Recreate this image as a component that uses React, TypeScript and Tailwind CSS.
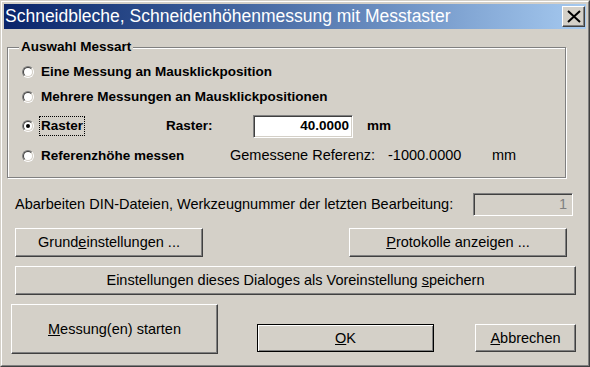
import type { ReactNode } from "react"

function Radio({ checked = false }: { checked?: boolean }) {
  return (
    <span className="flex h-[12px] w-[12px] shrink-0 rounded-full border border-t-[#808080] border-l-[#808080] border-r-white border-b-white">
      <span className="flex h-full w-full items-center justify-center rounded-full border border-t-[#404040] border-l-[#404040] border-r-[#d4d0c8] border-b-[#d4d0c8] bg-white">
        {checked && <span className="h-[4px] w-[4px] rounded-full bg-black" />}
      </span>
    </span>
  )
}

function Option({ label, checked = false, focused = false }: { label: string; checked?: boolean; focused?: boolean }) {
  return (
    <div className="flex items-center">
      <Radio checked={checked} />
      <span
        className={`ml-[5px] border border-dotted px-[1px] text-[13.5px] font-bold leading-[18px] ${
          focused ? "border-black" : "border-transparent"
        }`}
      >
        {label}
      </span>
    </div>
  )
}

function WinButton({ children, className = "" }: { children: ReactNode; className?: string }) {
  return (
    <div
      className={`flex items-center justify-center border border-t-white border-l-white border-r-[#404040] border-b-[#404040] text-[14.5px] leading-none shadow-[inset_-1px_-1px_0_#808080] ${className}`}
    >
      {children}
    </div>
  )
}

export default function App() {
  return (
    <div className="h-[367px] w-[590px] overflow-hidden border border-t-[#d4d0c8] border-l-[#d4d0c8] border-r-[#404040] border-b-[#404040] bg-[#d4d0c8] font-['Liberation_Sans',Arial,sans-serif] text-black select-none">
      <div className="flex h-full flex-col border border-t-white border-l-white border-r-[#808080] border-b-[#808080] p-[2px]">
        {/* Title bar */}
        <div className="flex h-[25px] shrink-0 items-center justify-between bg-linear-to-r from-[#0a246a] to-[#a6caf0] pl-[1px] pr-[1px]">
          <span className="text-[17.5px] leading-none text-white">Schneidbleche, Schneidenhöhenmessung mit Messtaster</span>
          <div className="flex h-[21px] w-[23px] items-center justify-center border border-t-white border-l-white border-r-[#404040] border-b-[#404040] bg-[#d4d0c8] shadow-[inset_-1px_-1px_0_#808080]">
            <svg width="14" height="13" viewBox="0 0 14 13">
              <path d="M1 1 L13 12 M13 1 L1 12" stroke="black" strokeWidth="2" fill="none" />
            </svg>
          </div>
        </div>

        {/* Group box */}
        <div className="relative ml-[3px] mt-[18px] h-[131px] w-[559px] shrink-0 border border-[#808080] pl-[14px] pt-[14px] shadow-[inset_1px_1px_0_white,1px_1px_0_white]">
          <span className="absolute -top-[9px] left-[11px] bg-[#d4d0c8] px-[2px] text-[13.5px] font-bold leading-[16px]">
            Auswahl Messart
          </span>
          <div className="flex h-[20px] items-center">
            <Option label="Eine Messung an Mausklickposition" />
          </div>
          <div className="mt-[5px] flex h-[20px] items-center">
            <Option label="Mehrere Messungen an Mausklickpositionen" />
          </div>
          <div className="mt-[7px] flex h-[24px] items-center">
            <div className="w-[144px]">
              <Option label="Raster" checked focused />
            </div>
            <span className="w-[87px] text-[13.5px] font-bold">Raster:</span>
            <div className="flex h-[23px] w-[100px] items-center justify-end border border-t-[#808080] border-l-[#808080] border-r-white border-b-white bg-white pr-[3px] text-[13.5px] font-bold shadow-[inset_1px_1px_0_#404040,inset_-1px_-1px_0_#d4d0c8]">
              40.0000
            </div>
            <span className="ml-[14px] text-[13.5px] font-bold">mm</span>
          </div>
          <div className="mt-[8px] flex h-[20px] items-center">
            <div className="w-[208px]">
              <Option label="Referenzhöhe messen" />
            </div>
            <span className="w-[158px] text-[14.5px]">Gemessene Referenz:</span>
            <span className="w-[104px] text-[14.5px]">-1000.0000</span>
            <span className="text-[14.5px]">mm</span>
          </div>
        </div>

        {/* DIN files row */}
        <div className="mt-[15px] flex h-[23px] shrink-0 items-center justify-between pl-[11px] pr-[13px]">
          <span className="text-[14.5px]">Abarbeiten DIN-Dateien, Werkzeugnummer der letzten Bearbeitung:</span>
          <div className="flex h-[23px] w-[100px] items-center justify-end border border-t-[#808080] border-l-[#808080] border-r-white border-b-white pr-[5px] text-[14.5px] text-[#808080] shadow-[inset_1px_1px_0_#404040,inset_-1px_-1px_0_#d4d0c8]">
            1
          </div>
        </div>

        <div className="mt-[12px] flex shrink-0 justify-between pl-[11px] pr-[19px]">
          <WinButton className="h-[29px] w-[188px]">
            <span>
              Grund<u>e</u>instellungen ...
            </span>
          </WinButton>
          <WinButton className="h-[29px] w-[218px]">
            <span>
              <u>P</u>rotokolle anzeigen ...
            </span>
          </WinButton>
        </div>

        <div className="mt-[9px] flex shrink-0 pl-[11px] pr-[10px]">
          <WinButton className="h-[29px] w-full">
            <span>
              Einstellungen dieses Dialoges als Voreinstellung <u>s</u>peichern
            </span>
          </WinButton>
        </div>

        <div className="mt-[9px] flex shrink-0 items-start pl-[7px]">
          <WinButton className="h-[50px] w-[207px]">
            <span>
              <u>M</u>essung(en) starten
            </span>
          </WinButton>
          <div className="ml-[39px] mt-[20px] flex h-[28px] w-[177px] items-center justify-center border border-black text-[14.5px] leading-none shadow-[inset_1px_1px_0_white,inset_-1px_-1px_0_#808080]">
            <span>
              <u>O</u>K
            </span>
          </div>
          <WinButton className="ml-[41px] mt-[20px] h-[28px] w-[101px]">
            <span>
              <u>A</u>bbrechen
            </span>
          </WinButton>
        </div>
      </div>
    </div>
  )
}
